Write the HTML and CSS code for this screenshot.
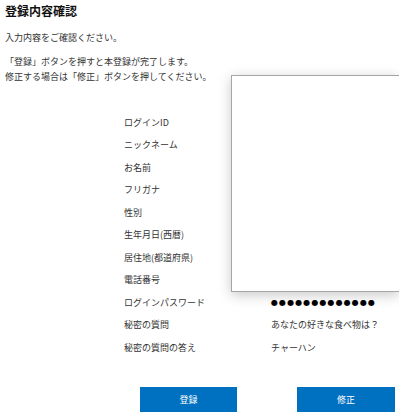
FILE: index.html
```html
<!DOCTYPE html>
<html lang="ja">
<head>
<meta charset="utf-8">
<title>登録内容確認</title>
<link rel="stylesheet" href="styles.css">
</head>
<body>
<div class="page">
  <h1 class="title">登録内容確認</h1>
  <p class="lead">入力内容をご確認ください。</p>
  <p class="note">「登録」ボタンを押すと本登録が完了します。<br>修正する場合は「修正」ボタンを押してください。</p>
  <div class="table">
    <div class="label">ログインID</div><div class="value"></div>
    <div class="label">ニックネーム</div><div class="value"></div>
    <div class="label">お名前</div><div class="value"></div>
    <div class="label">フリガナ</div><div class="value"></div>
    <div class="label">性別</div><div class="value"></div>
    <div class="label">生年月日(西暦)</div><div class="value"></div>
    <div class="label">居住地(都道府県)</div><div class="value"></div>
    <div class="label">電話番号</div><div class="value"></div>
    <div class="label">ログインパスワード</div><div class="value dots">●●●●●●●●●●●●●</div>
    <div class="label">秘密の質問</div><div class="value">あなたの好きな食べ物は？</div>
    <div class="label">秘密の質問の答え</div><div class="value">チャーハン</div>
  </div>
  <div class="buttons">
    <button class="btn">登録</button>
    <button class="btn">修正</button>
  </div>
</div>
<div class="popup"></div>
</body>
</html>
```
FILE: styles.css
```css
html, body {
  margin: 0;
  padding: 0;
  background: #fff;
}
body {
  font-family: "Noto Sans CJK JP", "Noto Sans", sans-serif;
  color: #333;
  width: 399px;
  height: 414px;
  overflow: hidden;
  position: relative;
}
.page {
  padding: 0 0 0 5px;
}
.title {
  margin: 0;
  font-size: 12px;
  line-height: 22px;
  font-weight: bold;
  color: #111;
}
.lead {
  margin: 8px 0 0;
  font-size: 9px;
  line-height: 15px;
}
.note {
  margin: 9px 0 0;
  font-size: 9px;
  line-height: 15px;
}
.table {
  margin: 27px 0 0 119px;
  display: grid;
  grid-template-columns: 147px 1fr;
  grid-auto-rows: 22.5px;
  font-size: 9px;
  align-items: center;
}
.dots {
  font-family: "DejaVu Sans", sans-serif;
  font-size: 8px;
  letter-spacing: 1.1px;
  color: #000;
}
.buttons {
  display: flex;
  gap: 60px;
  margin: 28px 0 0 135px;
}
.btn {
  width: 97px;
  height: 25px;
  border: none;
  background: #0070c0;
  color: #fff;
  font-family: "Noto Sans CJK JP", sans-serif;
  font-size: 9px;
  padding: 0;
}
.btn + .btn {
  width: 98px;
}
.popup {
  position: absolute;
  left: 231px;
  top: 75px;
  width: 167px;
  height: 215px;
  background: #fff;
  border: 1px solid #a6a6a6;
  border-right: none;
  box-shadow: 0 3px 12px rgba(0, 0, 0, 0.22);
}
```
